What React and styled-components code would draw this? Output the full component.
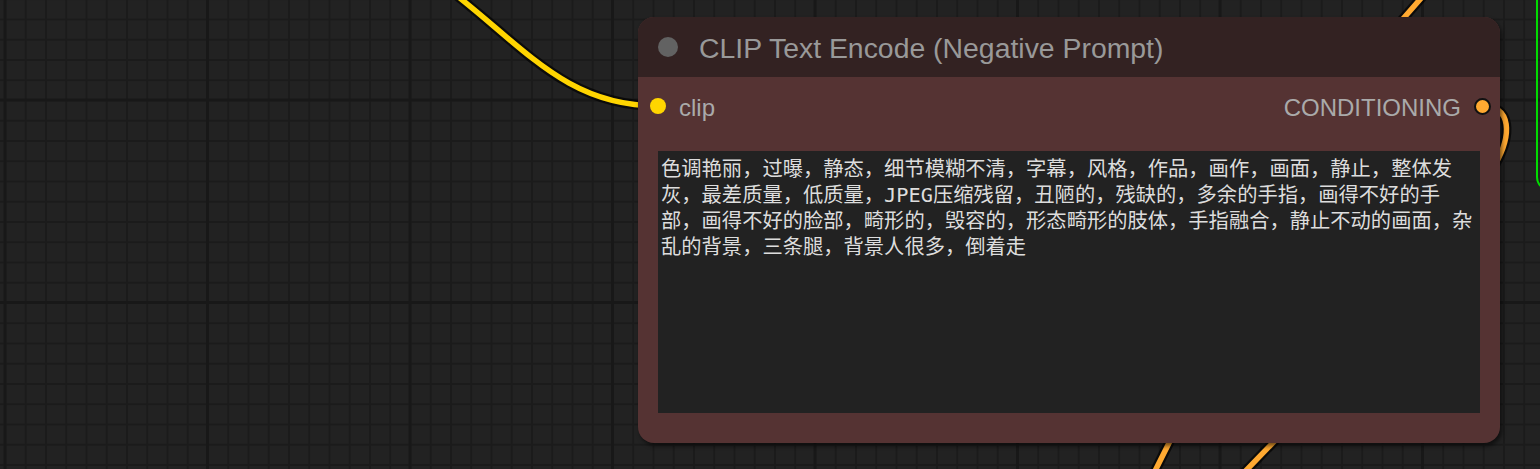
import React from 'react'
import styled, { createGlobalStyle } from 'styled-components'

const GlobalStyle = createGlobalStyle`
  html, body {
    margin: 0;
    padding: 0;
    background: #222;
    overflow: hidden;
  }
`

const Canvas = styled.div`
  position: relative;
  width: 1540px;
  height: 469px;
  overflow: hidden;
  background-color: #222222;
  background-image:
    linear-gradient(to right, #181818 3px, transparent 3px),
    linear-gradient(to bottom, #181818 3px, transparent 3px),
    linear-gradient(to right, #1b1b1b 1.5px, transparent 1.5px),
    linear-gradient(to bottom, #1b1b1b 1.5px, transparent 1.5px);
  background-size: 202.5px 202.5px, 202.5px 202.5px, 20.25px 20.25px, 20.25px 20.25px;
  background-position: 3.5px 0, 0 98.5px, 4.5px 0, 0 18.5px;
`

const Wires = styled.svg`
  position: absolute;
  left: 0;
  top: 0;
  width: 1540px;
  height: 469px;
`

const RunningOutline = styled.div`
  position: absolute;
  left: 1536px;
  top: -30px;
  width: 60px;
  height: 221px;
  box-sizing: border-box;
  border: 2.5px solid #00dd00;
  border-radius: 0 0 0 14px;
`

const Node = styled.div`
  position: absolute;
  left: 638px;
  top: 17px;
  width: 862px;
  height: 426px;
  display: flex;
  flex-direction: column;
  border-radius: 16px;
  overflow: hidden;
  background: #553333;
  box-shadow: 2px 3px 4px rgba(0, 0, 0, 0.55);
`

const TitleBar = styled.div`
  height: 60px;
  flex: none;
  display: flex;
  align-items: center;
  padding: 2px 0 0 20px;
  box-sizing: border-box;
  background: #332222;
`

const TitleDot = styled.span`
  width: 20px;
  height: 20px;
  border-radius: 50%;
  background: #626262;
  margin: -3px 21px 0 0;
`

const Title = styled.span`
  font-family: 'Liberation Sans', Arial, sans-serif;
  font-size: 28.4px;
  line-height: 1;
  color: #999;
  white-space: nowrap;
`

const SlotRow = styled.div`
  height: 58px;
  flex: none;
  display: flex;
  align-items: center;
  justify-content: space-between;
  padding: 0 9px 0 12px;
`

const Slot = styled.div`
  display: flex;
  align-items: center;
  gap: 13px;
`

const SlotDot = styled.span`
  width: ${p => (p.$outlined ? 13 : 16)}px;
  height: ${p => (p.$outlined ? 13 : 16)}px;
  border-radius: 50%;
  background: ${p => p.$color};
  border: ${p => (p.$outlined ? '2px solid #111' : 'none')};
`

const SlotLabel = styled.span`
  font-family: 'Liberation Sans', Arial, sans-serif;
  font-size: 24px;
  line-height: 1;
  color: #aaa;
  margin-top: 4px;
`

const WidgetArea = styled.div`
  flex: 1;
  display: flex;
  margin: 16px 20px 30px;
`

const PromptBox = styled.textarea`
  flex: 1;
  margin: 0;
  border: none;
  outline: none;
  resize: none;
  overflow: hidden;
  box-sizing: border-box;
  padding: 5px 3px;
  background: #222222;
  color: #dddddd;
  font-family: 'DejaVu Sans Mono', 'Noto Sans CJK SC', monospace;
  font-size: 20.3px;
  line-height: 26px;
`

const prompt =
  '色调艳丽，过曝，静态，细节模糊不清，字幕，风格，作品，画作，画面，静止，整体发灰，最差质量，低质量，JPEG压缩残留，丑陋的，残缺的，多余的手指，画得不好的手部，画得不好的脸部，畸形的，毁容的，形态畸形的肢体，手指融合，静止不动的画面，杂乱的背景，三条腿，背景人很多，倒着走'

function Wire({ d, color }) {
  return (
    <g fill="none" strokeLinecap="round">
      <path d={d} stroke="#000" strokeOpacity="0.65" strokeWidth="10" />
      <path d={d} stroke={color} strokeWidth="5.5" />
    </g>
  )
}

export default function App() {
  return (
    <>
      <GlobalStyle />
      <Canvas>
        <Wires viewBox="0 0 1540 469">
          <Wire color="#FFD500" d="M 430 -25 C 520 40, 560 106, 658 106" />
          <Wire color="#FFA931" d="M 1430 -12 L 1395 28" />
          <Wire color="#FFA931" d="M 1482 106 C 1512 106, 1512 135, 1495 165" />
          <Wire color="#FFA931" d="M 1178 425 L 1148 485" />
          <Wire color="#FFA931" d="M 1290 425 L 1232 485" />
        </Wires>
        <RunningOutline />
        <Node>
          <TitleBar>
            <TitleDot />
            <Title>CLIP Text Encode (Negative Prompt)</Title>
          </TitleBar>
          <SlotRow>
            <Slot>
              <SlotDot $color="#FFD500" />
              <SlotLabel>clip</SlotLabel>
            </Slot>
            <Slot>
              <SlotLabel>CONDITIONING</SlotLabel>
              <SlotDot $color="#FFA931" $outlined />
            </Slot>
          </SlotRow>
          <WidgetArea>
            <PromptBox readOnly spellCheck={false} defaultValue={prompt} />
          </WidgetArea>
        </Node>
      </Canvas>
    </>
  )
}
